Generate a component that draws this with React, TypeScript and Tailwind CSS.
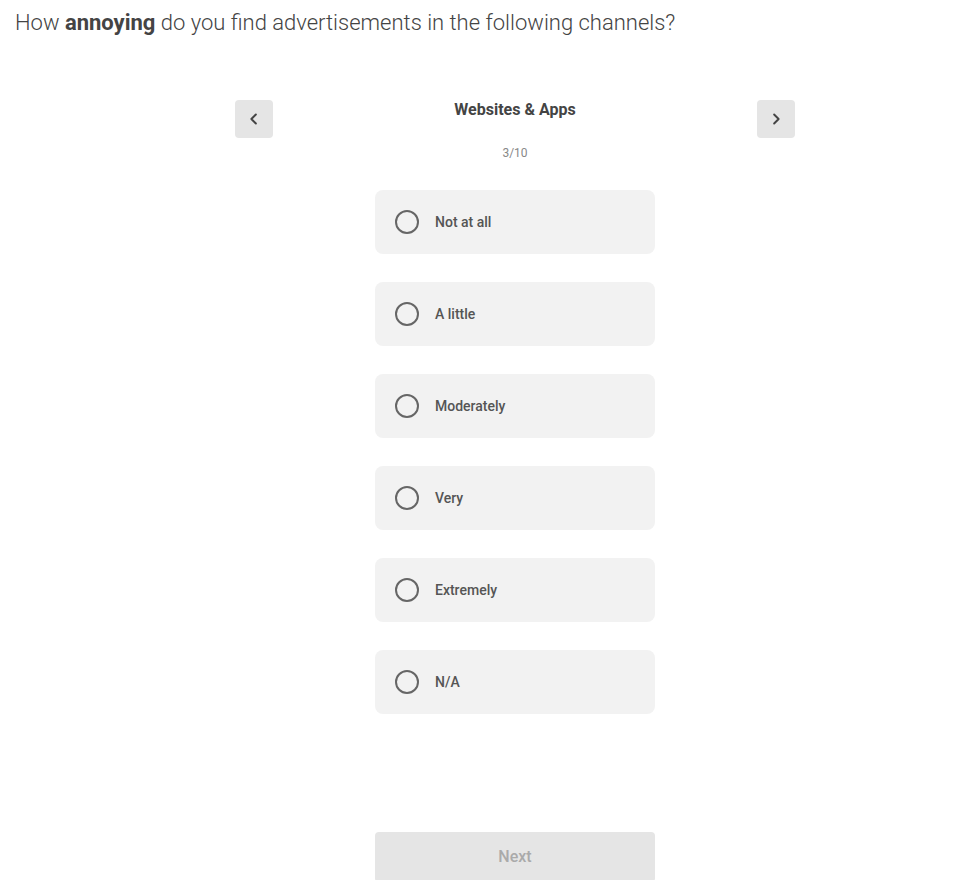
import React from "react";

const options = ["Not at all", "A little", "Moderately", "Very", "Extremely", "N/A"];

export default function App() {
  return (
    <div className="w-[965px] h-[880px] overflow-hidden bg-white" style={{ fontFamily: "Roboto, 'Liberation Sans', sans-serif" }}>
      <h1 className="pl-[15px] pt-[9px] text-[22px] leading-[28px] font-light text-[#444]">
        How <span className="font-bold">annoying</span> do you find advertisements in the following channels?
      </h1>
      <div className="ml-[235px] w-[560px] mt-[63px] flex flex-col items-center">
        <div className="w-full flex items-start justify-between">
          <button className="w-[38px] h-[38px] rounded bg-[#e5e5e5] flex items-center justify-center">
            <svg width="18" height="18" viewBox="0 0 24 24" fill="none" stroke="#444" strokeWidth="2.6" strokeLinecap="round" strokeLinejoin="round"><path d="M14.5 6l-6 6 6 6" /></svg>
          </button>
          <div className="flex flex-col items-center">
            <div className="text-[16px] leading-[20px] font-bold text-[#444]">Websites &amp; Apps</div>
            <div className="mt-[25px] text-[12px] leading-[16px] text-[#888]">3/10</div>
          </div>
          <button className="w-[38px] h-[38px] rounded bg-[#e5e5e5] flex items-center justify-center">
            <svg width="18" height="18" viewBox="0 0 24 24" fill="none" stroke="#444" strokeWidth="2.6" strokeLinecap="round" strokeLinejoin="round"><path d="M9.5 6l6 6-6 6" /></svg>
          </button>
        </div>
        <div className="mt-[29px] flex flex-col gap-[28px]">
          {options.map((o) => (
            <div key={o} className="w-[280px] h-[64px] rounded-lg bg-[#f2f2f2] flex items-center pl-[20px]">
              <div className="w-[24px] h-[24px] rounded-full border-2 border-[#666] shrink-0" />
              <span className="ml-[16px] text-[14px] font-medium text-[#555]">{o}</span>
            </div>
          ))}
        </div>
        <button className="mt-[118px] w-[280px] h-[50px] rounded bg-[#e5e5e5] text-[16px] font-medium text-[#aaa] flex items-center justify-center">
          Next
        </button>
      </div>
    </div>
  );
}
